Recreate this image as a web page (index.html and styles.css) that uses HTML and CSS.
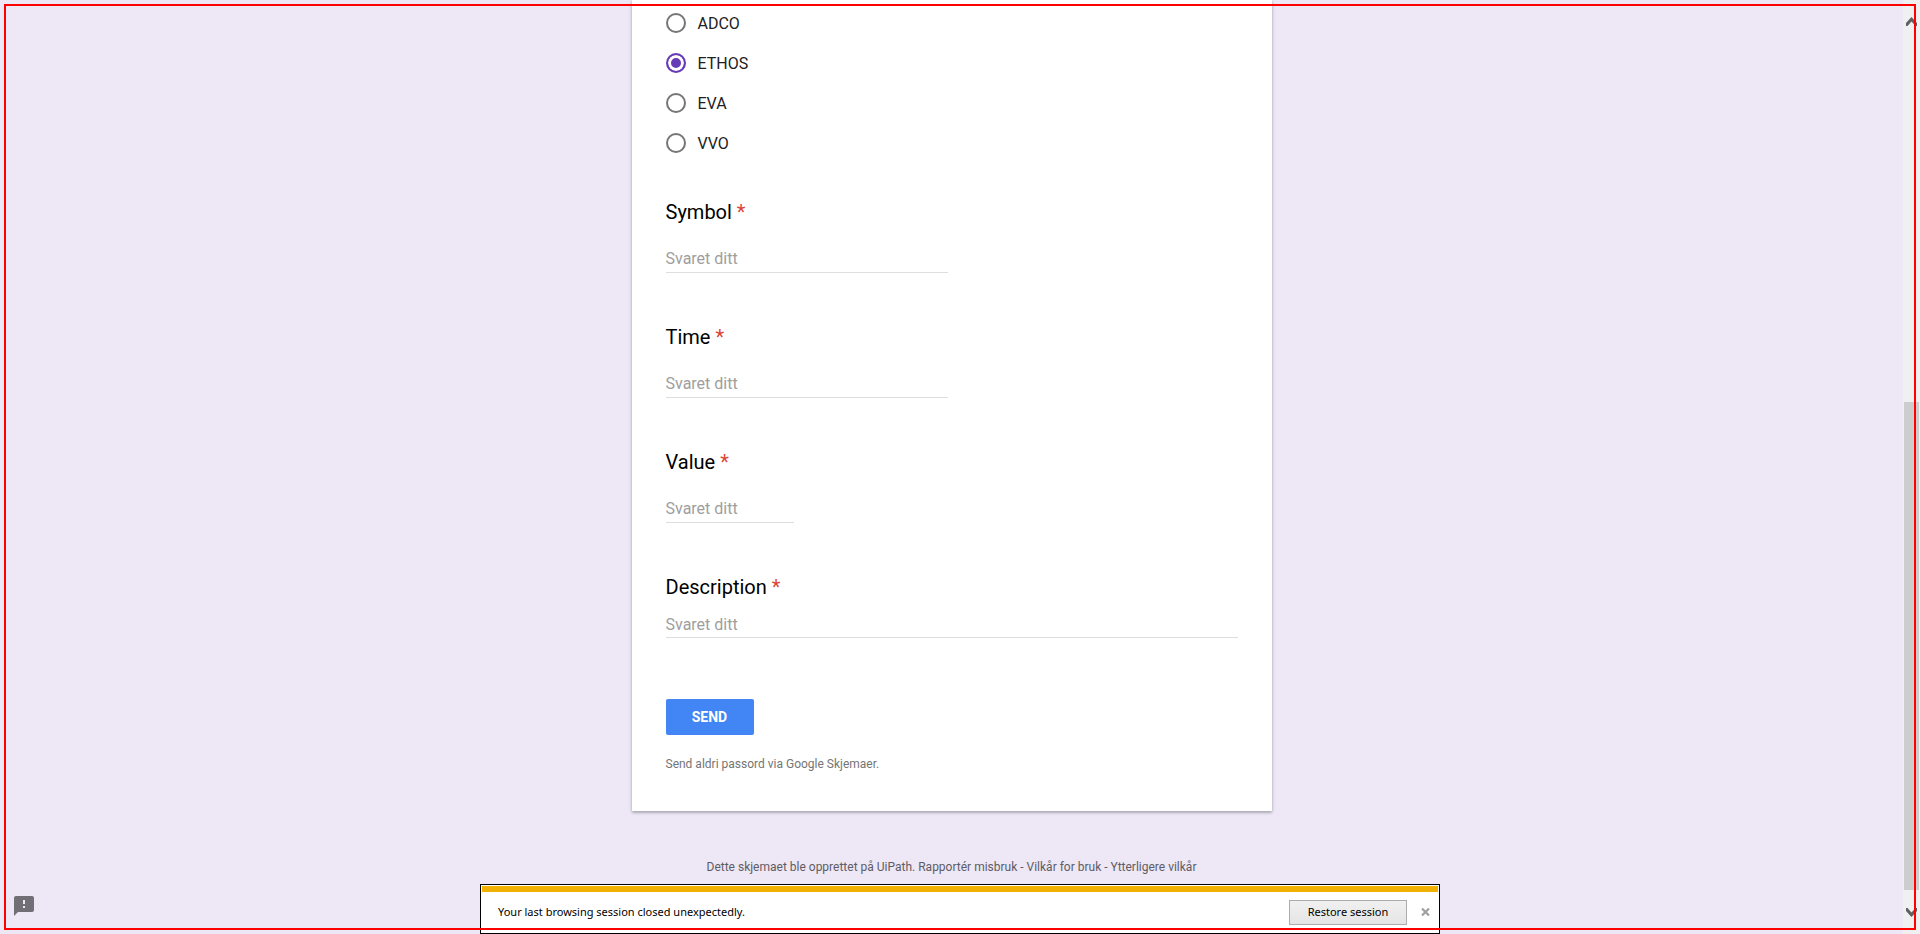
FILE: index.html
```html
<!DOCTYPE html>
<html lang="no">
<head>
<meta charset="utf-8">
<title>Skjema</title>
<link rel="stylesheet" href="styles.css">
</head>
<body>
<div class="window">
  <main class="page">
    <form class="card">
      <div class="options" role="radiogroup" aria-label="Type">
        <label class="option"><input class="radio" type="radio" name="type">ADCO</label>
        <label class="option"><input class="radio" type="radio" name="type" checked>ETHOS</label>
        <label class="option"><input class="radio" type="radio" name="type">EVA</label>
        <label class="option"><input class="radio" type="radio" name="type">VVO</label>
      </div>
      <div class="question">
        <label class="title" for="symbol">Symbol <span class="required">*</span></label>
        <input class="answer" id="symbol" type="text" placeholder="Svaret ditt">
      </div>
      <div class="question">
        <label class="title" for="time">Time <span class="required">*</span></label>
        <input class="answer" id="time" type="text" placeholder="Svaret ditt">
      </div>
      <div class="question">
        <label class="title" for="value">Value <span class="required">*</span></label>
        <input class="answer answer-short" id="value" type="text" placeholder="Svaret ditt">
      </div>
      <div class="question question-long">
        <label class="title" for="description">Description <span class="required">*</span></label>
        <textarea class="answer answer-long" id="description" rows="1" placeholder="Svaret ditt"></textarea>
      </div>
      <button class="send" type="button">SEND</button>
      <p class="note">Send aldri passord via Google Skjemaer.</p>
    </form>
    <footer class="footer">Dette skjemaet ble opprettet på UiPath. <a href="#">Rapportér misbruk</a> - <a href="#">Vilkår for bruk</a> - <a href="#">Ytterligere vilkår</a></footer>
  </main>
  <div class="scrollbar" aria-hidden="true">
    <svg class="arrow" width="11" height="9" viewBox="0 0 11 9"><path d="M0 6 5.500 0 11 6V9H9.500L5.500 4.500 1.500 9H0z" fill="#606060"/></svg>
    <div class="track"><div class="thumb"></div></div>
    <svg class="arrow" width="11" height="9" viewBox="0 0 11 9"><path d="M0 3 5.500 9 11 3V0H9.500L5.500 4.500 1.500 0H0z" fill="#606060"/></svg>
  </div>
</div>
<button class="feedback" type="button" aria-label="Rapporter et problem">
  <svg width="20" height="20" viewBox="0 0 20 20"><path d="M2 0H18a2 2 0 0 1 2 2V14a2 2 0 0 1-2 2H4L0 20V2A2 2 0 0 1 2 0zM9 4V8H11V4zM9 10V12H11V10z" fill="#716e76" fill-rule="evenodd"/></svg>
</button>
<section class="notice" aria-label="Session">
  <div class="notice-bar">
    <span class="notice-text">Your last browsing session closed unexpectedly.</span>
    <button class="restore" type="button">Restore session</button>
    <button class="close" type="button" aria-label="Close">
      <svg width="9" height="8" viewBox="0 0 9 8"><path d="M1 0.500 8 7.500M8 0.500 1 7.500" stroke="#a0a0a0" stroke-width="2.200"/></svg>
    </button>
  </div>
</section>
<div class="frame"></div>
</body>
</html>
```
FILE: styles.css
```css
* { box-sizing: border-box; }

body {
  margin: 0;
  background: #ede7f6;
  font-family: Roboto, "Liberation Sans", sans-serif;
  overflow: hidden;
}

button {
  margin: 0;
  padding: 0;
  border: 0;
  background: none;
}

.window {
  display: grid;
  grid-template-columns: 1fr 17px;
  height: 100vh;
}

.page {
  display: flex;
  flex-direction: column;
  align-items: center;
}

.card {
  display: flex;
  flex-direction: column;
  align-items: flex-start;
  width: 100%;
  max-width: 640px;
  padding: 3px 34px 39px;
  background: #fff;
  box-shadow: 0 2px 2px rgba(0, 0, 0, 0.14), 0 1px 4px rgba(0, 0, 0, 0.2);
}

.options { margin-bottom: 36px; }

.option {
  display: flex;
  align-items: center;
  gap: 12px;
  height: 40px;
  font-size: 16px;
  color: #212121;
}

.radio {
  appearance: none;
  width: 20px;
  height: 20px;
  margin: 0;
  border: 2px solid #757575;
  border-radius: 50%;
}

.radio:checked {
  border-color: #673ab7;
  background: #673ab7;
  box-shadow: inset 0 0 0 3px #fff;
}

.question {
  display: flex;
  flex-direction: column;
  align-items: flex-start;
  gap: 20px;
  width: 100%;
  margin-bottom: 51px;
}

.question-long {
  gap: 12px;
  margin-bottom: 61px;
}

.title {
  font-size: 20px;
  line-height: 27px;
  color: #000;
}

.required { color: #db4437; }

.answer {
  display: block;
  width: 282px;
  height: 27px;
  margin: 0;
  padding: 0 0 2px;
  border: 0;
  border-bottom: 1px solid #dedede;
  border-radius: 0;
  background: none;
  font: 16px/24px Roboto, "Liberation Sans", sans-serif;
  color: #212121;
  resize: none;
  overflow: hidden;
}

.answer::placeholder { color: #9e9e9e; }
.answer-short { width: 128px; }

.answer-long {
  width: 100%;
  height: 25px;
  padding: 0;
}

.send {
  width: 88px;
  height: 36px;
  border-radius: 2px;
  background: #4285f4;
  font: 700 14px/36px Roboto, "Liberation Sans", sans-serif;
  color: #fff;
}

.note {
  margin: 21px 0 0;
  font-size: 12px;
  line-height: 16px;
  color: #757575;
}

.footer {
  margin-top: 48px;
  font-size: 12px;
  line-height: 16px;
  color: #5f5c63;
}

.footer a {
  color: inherit;
  text-decoration: none;
}

.scrollbar {
  display: flex;
  flex-direction: column;
  align-items: center;
  padding: 17px 0;
  background: #f0f0f0;
}

.track {
  display: flex;
  flex: 1;
  flex-direction: column;
  justify-content: flex-end;
  width: 15px;
  padding-bottom: 18px;
}

.thumb {
  height: 56.5%;
  background: #cdcdcd;
}

.arrow { flex: none; }

.feedback {
  position: fixed;
  left: 14px;
  bottom: 18px;
  height: 20px;
}

.feedback svg, .close svg { display: block; }

.notice {
  position: fixed;
  bottom: 0;
  left: 0;
  right: 0;
  width: 50%;
  margin: 0 auto;
  padding: 1px;
  border: 1px solid #000;
  background: #fff;
}

.notice-bar {
  display: flex;
  align-items: center;
  height: 46px;
  padding: 0 8px 0 16px;
  border-top: 6px solid #f2b100;
  font: 11px/16px "Noto Sans", "Open Sans", sans-serif;
  color: #000;
}

.notice-text { flex: 1; }

.restore {
  width: 118px;
  height: 25px;
  border: 1px solid #acacac;
  background: linear-gradient(#f0f0f0, #e5e5e5);
  font: inherit;
}

.close {
  margin-left: 14px;
}

.frame {
  position: fixed;
  inset: 4px;
  border: 2px solid #f00;
  pointer-events: none;
}
```
